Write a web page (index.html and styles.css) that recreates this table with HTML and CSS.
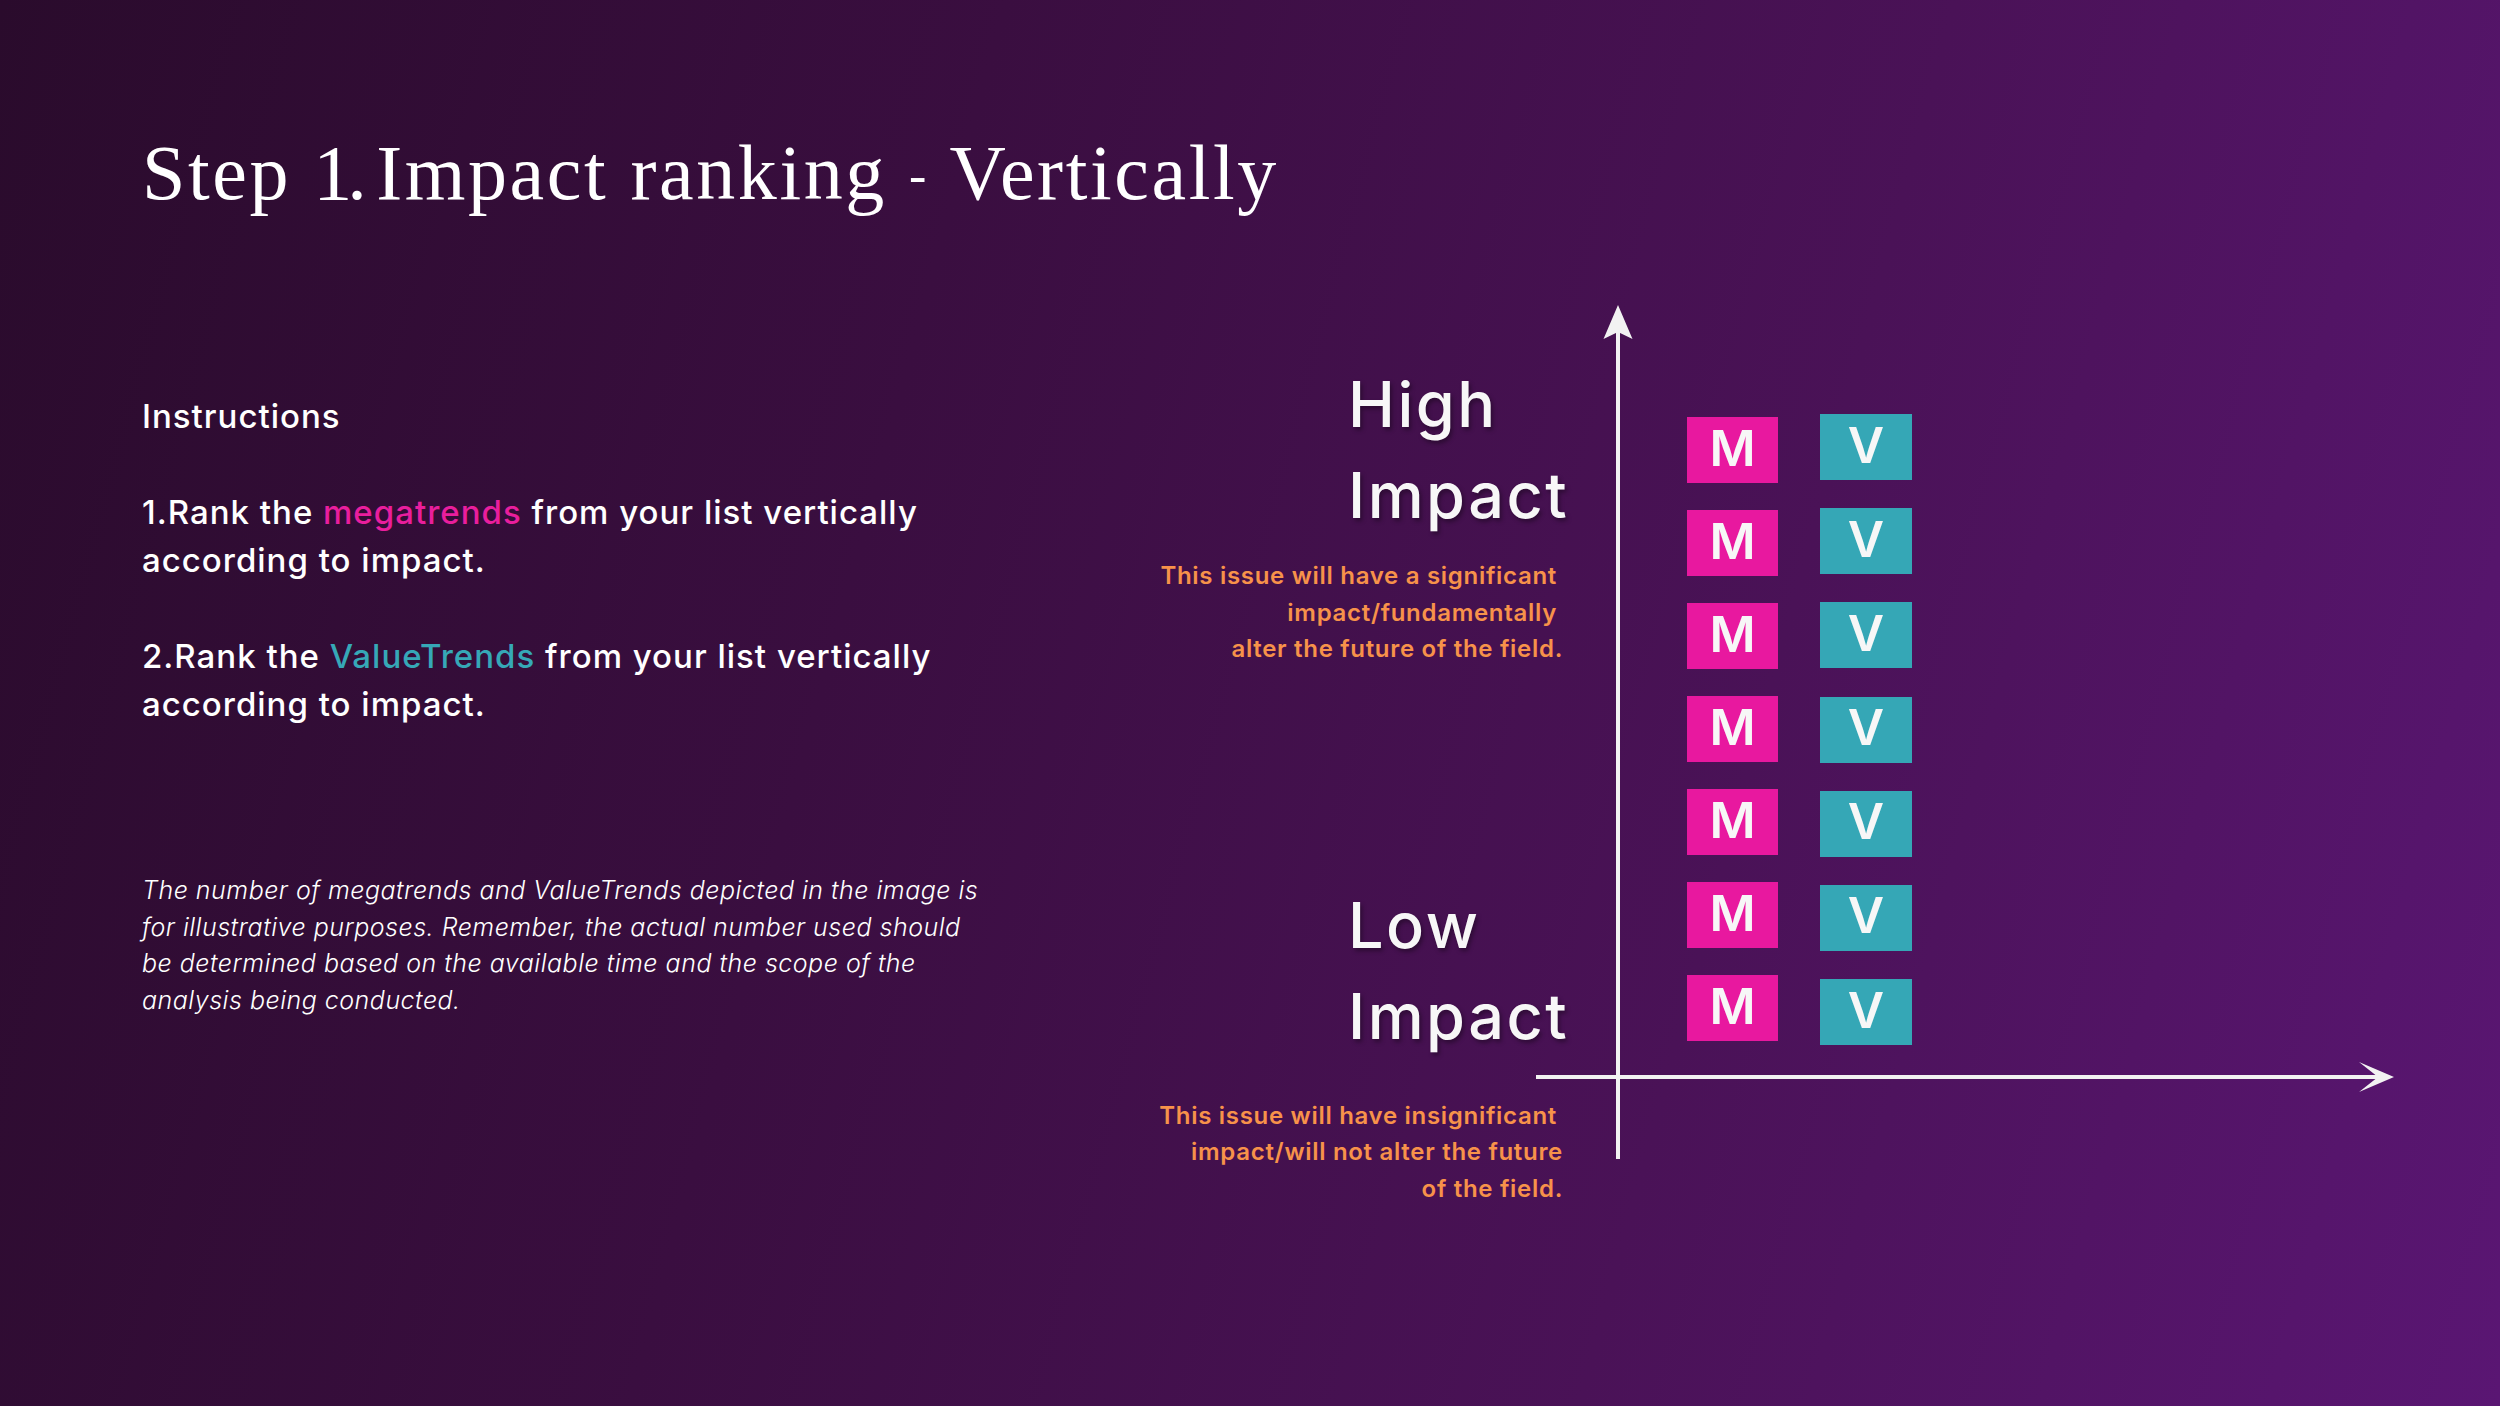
FILE: index.html
```html
<!DOCTYPE html>
<html lang="en">
<head>
<meta charset="utf-8">
<title>Step 1. Impact ranking - Vertically</title>
<link rel="stylesheet" href="styles.css">
</head>
<body>
<div class="slide">
  <h1 class="title">Step <span class="num">1. </span>Impact ranking <span class="dash">-</span> Vertically</h1>
  <div class="body">
    <section class="left">
      <h2 class="instr-head">Instructions</h2>
      <p class="step">1.Rank the <span class="mega">megatrends</span> from your list vertically<br>according to impact.</p>
      <p class="step">2.Rank the <span class="value">ValueTrends</span> from your list vertically<br>according to impact.</p>
      <p class="note">The number of megatrends and ValueTrends depicted in the image is<br>for illustrative purposes. Remember, the actual number used should<br>be determined based on the available time and the scope of the<br>analysis being conducted.</p>
    </section>
    <section class="chart">
      <svg class="axes" viewBox="0 0 1350 920" xmlns="http://www.w3.org/2000/svg">
        <line x1="468" y1="30" x2="468" y2="859" stroke="#f2f2f2" stroke-width="4"/>
        <polygon points="468,5 482.5,39 468,32 453.5,39" fill="#f2f2f2"/>
        <line x1="386" y1="777" x2="1230" y2="777" stroke="#f2f2f2" stroke-width="4"/>
        <polygon points="1244,777 1209,762 1228,777 1209,792" fill="#f2f2f2"/>
      </svg>
      <div class="labels">
        <div class="impact-label">High<br>Impact</div>
        <p class="impact-note"><span class="ln">This issue will have a significant</span><br><span class="ln">impact/fundamentally</span><br>alter the future of the field.</p>
        <div class="impact-label low">Low<br>Impact</div>
        <p class="impact-note low-note"><span class="ln">This issue will have insignificant</span><br>impact/will not alter the future<br>of the field.</p>
      </div>
      <div class="col col-m">
        <div class="box m">M</div>
        <div class="box m">M</div>
        <div class="box m">M</div>
        <div class="box m">M</div>
        <div class="box m">M</div>
        <div class="box m">M</div>
        <div class="box m">M</div>
      </div>
      <div class="col col-v">
        <div class="box v">V</div>
        <div class="box v">V</div>
        <div class="box v">V</div>
        <div class="box v">V</div>
        <div class="box v">V</div>
        <div class="box v">V</div>
        <div class="box v">V</div>
      </div>
    </section>
  </div>
</div>
</body>
</html>
```
FILE: styles.css
```css
* {
  box-sizing: border-box;
  margin: 0;
  padding: 0;
}

body {
  margin: 0;
  width: 2500px;
  height: 1406px;
  overflow: hidden;
  background: linear-gradient(105deg, #2a0b2c 0%, #3a0e40 35%, #4a1257 68%, #5a1673 100%);
  font-family: Inter, "Noto Sans", sans-serif;
  color: #ffffff;
}

.slide {
  width: 2500px;
  height: 1406px;
  padding: 134px 0 0 142px;
}

.title {
  height: 78px;
  font-family: "Liberation Serif", "Times New Roman", serif;
  font-weight: 400;
  font-size: 78px;
  line-height: 78px;
  letter-spacing: 2.6px;
  color: #ffffff;
}

.title .num {
  letter-spacing: -5px;
}

.title .dash {
  display: inline-block;
  font-size: 52px;
  transform: translateY(-6px);
}

.body {
  display: flex;
  margin-top: 88px;
}

.left {
  width: 1008px;
  flex-shrink: 0;
  padding-top: 92px;
}

.instr-head,
.step {
  font-size: 33px;
  line-height: 48px;
  font-weight: 500;
  letter-spacing: 1px;
}

.step {
  margin-top: 48px;
}

.mega {
  color: #e91e9d;
}

.value {
  color: #36a8b7;
}

.note {
  margin-top: 144px;
  font-size: 25px;
  line-height: 36.7px;
  font-weight: 300;
  font-style: italic;
  letter-spacing: 0.5px;
}

.chart {
  position: relative;
  display: flex;
  align-items: flex-start;
  width: 1350px;
  height: 920px;
  flex-shrink: 0;
}

.axes {
  position: absolute;
  left: 0;
  top: 0;
  width: 1350px;
  height: 920px;
}

.labels {
  width: 415px;
  flex-shrink: 0;
  display: flex;
  flex-direction: column;
  padding-top: 59px;
  position: relative;
}

.impact-label {
  padding-left: 198px;
  font-size: 63px;
  line-height: 91px;
  font-weight: 500;
  letter-spacing: 2.5px;
  color: #f7f7f7;
  text-shadow: 2px 3px 4px rgba(0, 0, 0, 0.35);
}

.impact-label.low {
  margin-top: 212px;
}

.impact-note {
  margin-top: 17px;
  text-align: right;
  color: #f7924a;
  font-size: 24px;
  line-height: 36.6px;
  font-weight: 600;
  letter-spacing: 0.7px;
  padding-right: 2px;
}

.impact-note .ln {
  padding-right: 6px;
}

.low-note {
  margin-top: 36px;
}

.col {
  display: flex;
  flex-direction: column;
  position: relative;
}

.col-m {
  margin-left: 122px;
  padding-top: 117px;
  gap: 27px;
}

.col-v {
  margin-left: 42px;
  padding-top: 114px;
  gap: 28.2px;
}

.box {
  width: 91px;
  height: 66px;
  display: flex;
  align-items: center;
  justify-content: center;
  padding-bottom: 5px;
  font-size: 50px;
  line-height: 1;
  font-weight: 600;
  color: #f7f7f7;
}

.m {
  background: #e8189f;
}

.v {
  width: 92px;
  background: #35a7b6;
}
```
